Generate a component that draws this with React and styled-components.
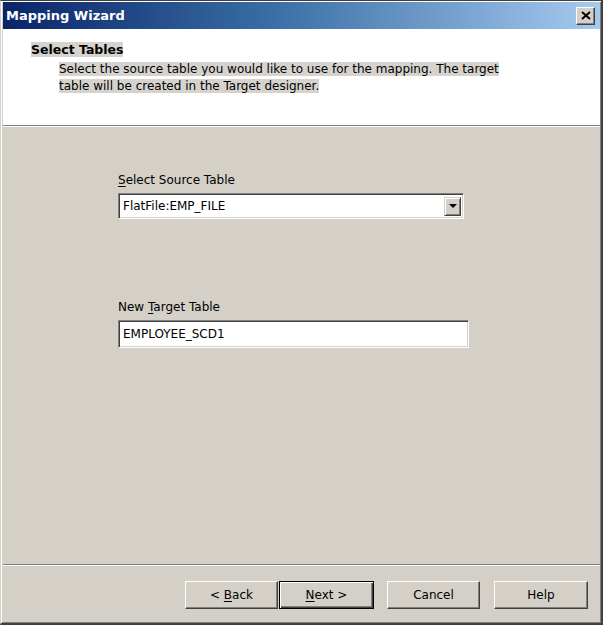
import React from 'react'
import styled, { createGlobalStyle } from 'styled-components'

const GlobalStyle = createGlobalStyle`
  body {
    margin: 0;
    background: #d4d0c8;
    font-family: "DejaVu Sans", Tahoma, sans-serif;
  }
`

const Window = styled.div`
  width: 603px;
  height: 625px;
  box-sizing: border-box;
  display: flex;
  flex-direction: column;
  background: #d4d0c8;
  border-top: 1px solid #404040;
  border-left: 1px solid #d4d0c8;
  border-right: 2px solid #404040;
  border-bottom: 2px solid #404040;
  box-shadow: inset 1px 1px 0 #ffffff, inset -1px -1px 0 #808080;
  padding: 1px 1px 1px 2px;
`

const TitleBar = styled.div`
  height: 27px;
  flex-shrink: 0;
  display: flex;
  align-items: center;
  justify-content: space-between;
  padding: 0 5px 0 3px;
  background: linear-gradient(to right, #0a246a 0%, #3a6ea5 45%, #a6caf0 100%);
`

const Title = styled.span`
  color: #ffffff;
  font-weight: bold;
  font-size: 13px;
`

const CloseButton = styled.div`
  width: 19px;
  height: 18px;
  box-sizing: border-box;
  background: #d4d0c8;
  border: 1px solid;
  border-color: #ffffff #404040 #404040 #ffffff;
  box-shadow: inset -1px -1px 0 #808080;
  display: flex;
  align-items: center;
  justify-content: center;
`

const Header = styled.div`
  height: 97px;
  flex-shrink: 0;
  background: #ffffff;
  padding: 12px 0 0 28px;
  box-sizing: border-box;
  border-bottom: 1px solid #808080;
  box-shadow: 0 1px 0 #ffffff;
`

const Heading = styled.div`
  font-weight: bold;
  font-size: 12.5px;
  line-height: 17px;
  color: #000;
  span {
    background: #d6d3ce;
  }
`

const Description = styled.div`
  margin: 3px 0 0 28px;
  width: 450px;
  font-size: 12px;
  line-height: 17px;
  color: #000;
  span {
    background: #d6d3ce;
  }
`

const Body = styled.div`
  flex: 1;
  padding: 44px 0 0 115px;
  display: flex;
  flex-direction: column;
  margin-top: 2px;
`

const Label = styled.div`
  font-size: 12px;
  line-height: 16px;
  color: #000;
  margin-bottom: 5px;
  u {
    text-decoration: underline;
    text-underline-offset: 2px;
  }
`

const Sunken = styled.div`
  width: ${p => p.$w}px;
  height: ${p => p.$h}px;
  box-sizing: border-box;
  background: #ffffff;
  border: 1px solid;
  border-color: #808080 #ffffff #ffffff #808080;
  box-shadow: inset 1px 1px 0 #404040, inset -1px -1px 0 #d4d0c8;
  display: flex;
  align-items: center;
  padding: 0 2px 0 4px;
  font-size: 12px;
  color: #000;
  margin-bottom: ${p => p.$mb || 0}px;
`

const ValueText = styled.span`
  flex: 1;
`

const DropButton = styled.div`
  width: 17px;
  height: 19px;
  box-sizing: border-box;
  background: #d4d0c8;
  border: 1px solid;
  border-color: #d4d0c8 #404040 #404040 #d4d0c8;
  box-shadow: inset 1px 1px 0 #ffffff, inset -1px -1px 0 #808080;
  display: flex;
  align-items: center;
  justify-content: center;
`

const Arrow = styled.div`
  width: 0;
  height: 0;
  border-left: 4px solid transparent;
  border-right: 4px solid transparent;
  border-top: 4px solid #000;
`

const Footer = styled.div`
  flex-shrink: 0;
  height: 58px;
  border-top: 1px solid #808080;
  box-shadow: inset 0 1px 0 #ffffff;
  display: flex;
  justify-content: flex-end;
  align-items: flex-start;
  padding: 16px 12px 0 0;
  box-sizing: border-box;
`

const Button = styled.button`
  width: ${p => p.$w || 93}px;
  height: 28px;
  margin-left: ${p => p.$ml || 0}px;
  box-sizing: border-box;
  background: #d4d0c8;
  font-family: "DejaVu Sans", Tahoma, sans-serif;
  font-size: 12px;
  color: #000;
  padding: 0;
  border: 1px solid;
  border-color: ${p => (p.$default ? '#000' : '#ffffff #404040 #404040 #ffffff')};
  box-shadow: ${p =>
    p.$default
      ? 'inset 1px 1px 0 #ffffff, inset -1px -1px 0 #404040, inset -2px -2px 0 #808080'
      : 'inset -1px -1px 0 #808080'};
  u {
    text-decoration: underline;
    text-underline-offset: 2px;
  }
`

export default function App() {
  return (
    <>
      <GlobalStyle />
      <Window>
        <TitleBar>
          <Title>Mapping Wizard</Title>
          <CloseButton>
            <svg width="10" height="9" viewBox="0 0 10 9">
              <path d="M1 1 L9 8 M9 1 L1 8" stroke="#000" strokeWidth="2" />
            </svg>
          </CloseButton>
        </TitleBar>
        <Header>
          <Heading><span>Select Tables</span></Heading>
          <Description>
            <span>
              Select the source table you would like to use for the mapping. The target table will be created in the Target designer.
            </span>
          </Description>
        </Header>
        <Body>
          <Label><u>S</u>elect Source Table</Label>
          <Sunken $w={346} $h={26} $mb={80}>
            <ValueText>FlatFile:EMP_FILE</ValueText>
            <DropButton><Arrow /></DropButton>
          </Sunken>
          <Label>New <u>T</u>arget Table</Label>
          <Sunken $w={351} $h={28}>
            <ValueText>EMPLOYEE_SCD1</ValueText>
          </Sunken>
        </Body>
        <Footer>
          <Button>&lt; <u>B</u>ack</Button>
          <Button $default $w={95} $ml={1}><u>N</u>ext &gt;</Button>
          <Button $ml={13}>Cancel</Button>
          <Button $ml={14} $w={94}>Help</Button>
        </Footer>
      </Window>
    </>
  )
}
